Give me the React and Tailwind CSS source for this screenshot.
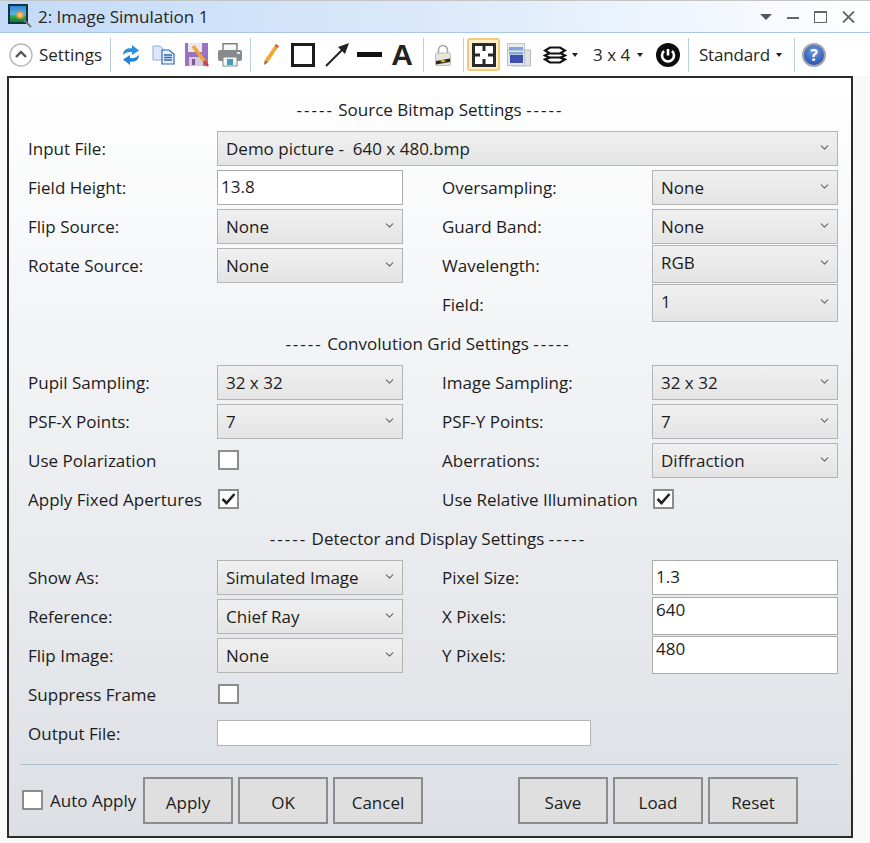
import React from "react";
import { ChevronDown } from "lucide-react";

const Select = ({ value, tall, className = "" }) => (
  <div className={`flex whitespace-pre border border-[#b4b4b4] bg-gradient-to-b from-[#f0f0f0] to-[#e4e4e4] pl-2 pr-[6px] text-[#1c1c1c] ${tall ? "mb-[4px] h-[38px] items-start pt-[8px]" : "h-[35px] items-center"} ${className}`}>
    <span className="flex-1">{value}</span>
    <ChevronDown size={13} strokeWidth={2} className={`text-[#666] ${tall ? "mt-[2px]" : "mb-[3px]"}`} />
  </div>
);

const Input = ({ value, tall }) => (
  <div className={`flex border border-[#ababab] bg-white px-[3px] text-[#1c1c1c] ${tall ? "mb-[2px] h-[38px] items-start pt-[3px]" : "h-[35px] items-center pb-[3px]"}`}>
    {value}
  </div>
);

const Check = ({ checked }) => (
  <div className="mb-[2px] ml-[1px] flex h-[20px] w-[21px] items-center justify-center border-2 border-[#8c8c8c] bg-white">
    {checked && (
      <svg width="15" height="12" viewBox="0 0 15 12">
        <path d="M1.5 6 L5.5 10 L13.5 1" fill="none" stroke="#222" strokeWidth="2.6" />
      </svg>
    )}
  </div>
);

const Row = ({ label, width, children }) => (
  <div className="flex h-[39px] items-center">
    <div className={`shrink-0 text-[#1c1c1c] ${width}`}>{label}</div>
    <div className="flex-1">{children}</div>
  </div>
);

const L = ({ label, children }) => <Row label={label} width="w-[189px]">{children}</Row>;
const R = ({ label, children }) => <Row label={label} width="w-[210px]">{children}</Row>;

const Heading = ({ title, shift }) => (
  <div className={`flex h-[39px] items-center justify-center text-[#1c1c1c] ${shift}`}>
    <div className="whitespace-pre">
      <span className="tracking-[2px]">-----</span> {title} <span className="tracking-[2px]">-----</span>
    </div>
  </div>
);

const Columns = ({ left, right }) => (
  <div className="grid grid-cols-[375px_396px] gap-x-[39px]">
    <div>{left}</div>
    <div>{right}</div>
  </div>
);

const Sep = ({ className = "" }) => <div className={`h-[34px] w-px shrink-0 bg-[#b9cfe2] ${className}`} />;

const Btn = ({ children }) => (
  <div className="flex h-[47px] w-[90px] items-center justify-center border-2 border-[#8c8c8c] bg-[#dfdfdf] pt-[3px] text-[#1c1c1c]">{children}</div>
);

const Caret = ({ className = "" }) => (
  <div className={`h-0 w-0 shrink-0 border-x-[3px] border-t-[4px] border-x-transparent border-t-[#222] ${className}`} />
);

const LogoIcon = () => (
  <svg width="25" height="25" viewBox="0 0 25 25" className="shrink-0">
    <defs>
      <linearGradient id="logoSky" x1="0" y1="0" x2="0" y2="1">
        <stop offset="0" stopColor="#2f86d8" />
        <stop offset="0.55" stopColor="#5db8d8" />
        <stop offset="0.6" stopColor="#36b04a" />
        <stop offset="1" stopColor="#0f7a3a" />
      </linearGradient>
      <radialGradient id="logoSun">
        <stop offset="0" stopColor="#fff3c8" />
        <stop offset="0.5" stopColor="#f7983a" />
        <stop offset="1" stopColor="#f7983a" stopOpacity="0" />
      </radialGradient>
    </defs>
    <rect x="0" y="0" width="20" height="20" fill="#143444" />
    <rect x="2" y="2" width="16" height="16" fill="url(#logoSky)" />
    <circle cx="12" cy="11" r="5" fill="url(#logoSun)" />
    <path d="M16 16 L23 23" stroke="#777" strokeWidth="2" />
  </svg>
);

const RefreshIcon = () => (
  <svg width="18" height="22" viewBox="0 0 18 22" className="ml-[11px] shrink-0">
    <path d="M1 11 C1 6 5 3.5 10 4.5 L10 1 L17 6.5 L10 11 L10 8 C6 7.5 3.5 8.5 1 11Z" fill="#2b8fe0" />
    <path d="M17 11 C17 16 13 18.5 8 17.5 L8 21 L1 15.5 L8 11 L8 14 C12 14.5 14.5 13.5 17 11Z" fill="#1f86dc" />
  </svg>
);

const CopyIcon = () => (
  <svg width="23" height="20" viewBox="0 0 23 20" className="ml-[12px] shrink-0">
    <path d="M1 1 H8 L11 4 V15 H1Z" fill="#dce8f8" stroke="#8fb0dc" />
    <path d="M10 5 H17 L22 9 V19 H10Z" fill="#e8f0fb" stroke="#2f68b4" strokeWidth="1.2" />
    <path d="M12 10 h8 M12 12.5 h8 M12 15 h8" stroke="#2f68b4" strokeWidth="1.3" />
  </svg>
);

const SaveIcon = () => (
  <svg width="24" height="24" viewBox="0 0 24 24" className="ml-[10px] shrink-0">
    <rect x="0" y="0" width="23" height="23" fill="#9b72bd" />
    <rect x="3" y="0" width="14" height="9" fill="#ece8f0" />
    <rect x="4" y="14" width="14" height="9" fill="#d6c8e0" />
    <rect x="7" y="16" width="3" height="6" fill="#7a5a9a" />
    <path d="M8 3 L20 19" stroke="#eea638" strokeWidth="3.6" />
    <path d="M19 18 L23 23" stroke="#d8402a" strokeWidth="2.6" />
  </svg>
);

const PrintIcon = () => (
  <svg width="24" height="24" viewBox="0 0 24 24" className="ml-[9px] shrink-0">
    <rect x="5" y="0.7" width="14" height="8" fill="#f6f6f6" stroke="#7b7b7b" strokeWidth="1.4" />
    <rect x="0" y="7" width="24" height="11" rx="2" fill="#868b90" />
    <rect x="5" y="14" width="14" height="9" fill="#f6f6f6" stroke="#888" />
    <rect x="9" y="16" width="6" height="6" fill="#3fa0b8" />
    <rect x="19" y="9" width="3" height="2" fill="#dfe5e8" />
  </svg>
);

const PencilIcon = () => (
  <svg width="16" height="22" viewBox="0 0 16 22" className="ml-[12px] shrink-0">
    <path d="M13 3 L3.5 17" stroke="#f0a83a" strokeWidth="4" />
    <path d="M14.5 1 L13 3" stroke="#d9573a" strokeWidth="4" />
    <path d="M1 21 L1.8 16 L5.2 18.2Z" fill="#8a6d3a" />
  </svg>
);

const LockIcon = () => (
  <svg width="16" height="22" viewBox="0 0 16 22" className="ml-[11px] shrink-0">
    <path d="M3.5 10 V6 a4.5 4.5 0 0 1 9 0 V10" fill="none" stroke="#a8a8a4" strokeWidth="1.6" />
    <rect x="0.5" y="9" width="15" height="12.5" rx="1.5" fill="#e6e6de" stroke="#bdbdb0" />
    <path d="M1 17 L15 14.5 V18 L1 20.5Z" fill="#2a2a20" />
    <path d="M5 16.5 L9 15.8 L11 17.5 L7 18.6Z" fill="#d8b62a" />
  </svg>
);

const ActiveIcon = () => (
  <div className="ml-[3px] flex h-[33px] w-[33px] shrink-0 items-center justify-center rounded-[3px] border-2 border-[#f2c979] bg-[#fff1cf]">
    <svg width="24" height="24" viewBox="0 0 24 24">
      <rect x="1.5" y="1.5" width="21" height="21" fill="#fff" stroke="#2a2a2a" strokeWidth="3" />
      <path d="M12 2 V8 M12 16 V22 M2 12 H8 M16 12 H22" stroke="#2a2a2a" strokeWidth="3" />
    </svg>
  </div>
);

const WindowsIcon = () => (
  <svg width="24" height="24" viewBox="0 0 24 24" className="ml-[7px] shrink-0">
    <rect x="0.5" y="0.5" width="17" height="11" fill="#e8ecf2" stroke="#c2c8d0" />
    <rect x="2" y="4" width="14" height="3" fill="#7fa3d4" />
    <rect x="6" y="7" width="17.5" height="16" fill="#dfe2e6" stroke="#b5bcc6" />
    <rect x="0.5" y="7.5" width="17" height="15" fill="#e4e7ec" stroke="#bcc2ca" />
    <rect x="2" y="9" width="14" height="2.5" fill="#86a7d4" />
    <rect x="3" y="12" width="13" height="8" fill="#3e4fae" />
  </svg>
);

const LayersIcon = () => (
  <svg width="24" height="18" viewBox="0 0 24 18" fill="none" stroke="#111" strokeWidth="2.2" className="ml-[12px] shrink-0">
    <path d="M7 1.5 H17 L22 4.5 L17 7.5 H7 L2 4.5Z" />
    <path d="M6 7.5 L2 9.5 L6 11.5 H18 L22 9.5 L18 7.5" />
    <path d="M7 11.5 L2 13.5 L7 16.5 H17 L22 13.5 L17 11.5" />
  </svg>
);

const PowerIcon = () => (
  <svg width="24" height="24" viewBox="0 0 24 24" className="ml-[13px] shrink-0">
    <circle cx="12" cy="12" r="12" fill="#0d0d0d" />
    <path d="M8 8 A6 6 0 1 0 16 8" fill="none" stroke="#fff" strokeWidth="2.6" />
    <path d="M12 6 V12.5" stroke="#fff" strokeWidth="2.6" />
  </svg>
);

const HelpIcon = () => (
  <svg width="24" height="24" viewBox="0 0 24 24" className="ml-[7px] shrink-0">
    <defs>
      <radialGradient id="helpFill" cx="0.5" cy="0.35" r="0.7">
        <stop offset="0" stopColor="#6f9be0" />
        <stop offset="1" stopColor="#1f48a8" />
      </radialGradient>
    </defs>
    <circle cx="12" cy="12" r="11" fill="url(#helpFill)" stroke="#a0a4ad" strokeWidth="2" />
    <text x="12" y="18" textAnchor="middle" fill="#fff" fontSize="16" fontWeight="700">?</text>
  </svg>
);

const App = () => (
  <div className="flex h-[843px] w-[870px] flex-col overflow-hidden bg-[#f9f9f9] font-['Open_Sans'] text-[17px] leading-none">
    {/* title bar */}
    <div className="flex h-[33px] shrink-0 items-center border-t border-b border-t-[#c4c4c4] border-b-[#a9c8e8] bg-gradient-to-r from-[#c3dbf8] via-[#dbe9fa] to-[#ffffff] pl-[8px] pr-[15px]">
      <LogoIcon />
      <span className="ml-[5px] flex-1 text-[#262626]">2: Image Simulation 1</span>
      <div className="flex items-center gap-[15px]">
        <div className="h-0 w-0 border-x-[6px] border-t-[6px] border-x-transparent border-t-[#555]" />
        <div className="mt-[2px] h-[2px] w-[12px] bg-[#666]" />
        <div className="h-[12px] w-[13px] border border-t-2 border-[#666]" />
        <svg width="13" height="12" viewBox="0 0 13 12"><path d="M1 0.5 L12 11.5 M12 0.5 L1 11.5" stroke="#666" strokeWidth="1.8" /></svg>
      </div>
    </div>

    {/* toolbar */}
    <div className="flex h-[43px] shrink-0 items-center bg-white pl-[9px] text-[#262626]">
      <svg width="24" height="24" viewBox="0 0 24 24" fill="none" className="shrink-0">
        <circle cx="12" cy="12" r="11" fill="#fff" stroke="#b8b8b8" strokeWidth="1.4" />
        <path d="M7 14 L12 9 L17 14" stroke="#555" strokeWidth="2.4" />
      </svg>
      <span className="ml-[6px] w-[64px] whitespace-nowrap">Settings</span>
      <Sep className="ml-[7px]" />
      <RefreshIcon />
      <CopyIcon />
      <SaveIcon />
      <PrintIcon />
      <Sep className="ml-[8px]" />
      <PencilIcon />
      <div className="ml-[12px] h-[24px] w-[24px] shrink-0 border-[3px] border-[#1c1c1c]" />
      <svg width="24" height="24" viewBox="0 0 24 24" className="ml-[10px] shrink-0"><path d="M1 23 L20 4" stroke="#222" strokeWidth="2" /><path d="M13 4 L24 0 L20 11Z" fill="#222" /></svg>
      <div className="ml-[8px] h-[5px] w-[25px] shrink-0 bg-[#111]" />
      <span className="ml-[9px] w-[22px] shrink-0 text-center font-['Liberation_Sans'] text-[30px] font-bold text-[#222]">A</span>
      <Sep className="ml-[10px]" />
      <LockIcon />
      <Sep className="ml-[12px]" />
      <ActiveIcon />
      <WindowsIcon />
      <LayersIcon />
      <Caret className="ml-[5px]" />
      <span className="ml-[15px] w-[38px] whitespace-nowrap">3 x 4</span>
      <Caret className="ml-[6px]" />
      <PowerIcon />
      <Sep className="ml-[8px]" />
      <span className="ml-[10px] w-[70px] whitespace-nowrap tracking-[-0.2px]">Standard</span>
      <Caret className="ml-[7px]" />
      <Sep className="ml-[12px]" />
      <HelpIcon />
    </div>

    {/* settings panel */}
    <div className="ml-[7px] flex h-[762px] w-[846px] flex-col border-2 border-[#2a2a2a] bg-gradient-to-b from-[#ffffff] to-[#dcdfe4] pl-[19px] pr-[13px] pt-[12px]">
      <Heading title="Source Bitmap Settings" shift="pr-[6px]" />
      <div className="flex h-[39px] items-center">
        <div className="w-[189px] shrink-0 text-[#1c1c1c]">Input File:</div>
        <Select value="Demo picture -  640 x 480.bmp" className="flex-1" />
      </div>
      <Columns
        left={<>
          <L label="Field Height:"><Input value="13.8" /></L>
          <L label="Flip Source:"><Select value="None" /></L>
          <L label="Rotate Source:"><Select value="None" /></L>
        </>}
        right={<>
          <R label="Oversampling:"><Select value="None" /></R>
          <R label="Guard Band:"><Select value="None" /></R>
          <R label="Wavelength:"><Select value="RGB" tall /></R>
          <R label="Field:"><Select value="1" tall /></R>
        </>}
      />
      <Heading title="Convolution Grid Settings" shift="pr-[10px]" />
      <Columns
        left={<>
          <L label="Pupil Sampling:"><Select value="32 x 32" /></L>
          <L label="PSF-X Points:"><Select value="7" /></L>
          <L label="Use Polarization"><Check /></L>
          <L label="Apply Fixed Apertures"><Check checked /></L>
        </>}
        right={<>
          <R label="Image Sampling:"><Select value="32 x 32" /></R>
          <R label="PSF-Y Points:"><Select value="7" /></R>
          <R label="Aberrations:"><Select value="Diffraction" /></R>
          <R label="Use Relative Illumination"><Check checked /></R>
        </>}
      />
      <Heading title="Detector and Display Settings" shift="pr-[10px]" />
      <Columns
        left={<>
          <L label="Show As:"><Select value="Simulated Image" /></L>
          <L label="Reference:"><Select value="Chief Ray" /></L>
          <L label="Flip Image:"><Select value="None" /></L>
          <L label="Suppress Frame"><Check /></L>
        </>}
        right={<>
          <R label="Pixel Size:"><Input value="1.3" /></R>
          <R label="X Pixels:"><Input value="640" tall /></R>
          <R label="Y Pixels:"><Input value="480" tall /></R>
        </>}
      />
      <div className="flex h-[39px] items-center">
        <div className="w-[189px] shrink-0 text-[#1c1c1c]">Output File:</div>
        <div className="mb-[1px] h-[26px] w-[374px] border border-[#b4b4b4] bg-white" />
      </div>
      <div className="-ml-[8px] mt-[11px] h-px bg-[#a9c0d0]" />
      <div className="-ml-[6px] mt-[12px] flex items-center">
        <div className="-ml-[1px]"><Check /></div>
        <span className="ml-[7px] w-[93px] whitespace-nowrap text-[#1c1c1c]">Auto Apply</span>
        <div className="flex gap-[5px]">
          <Btn>Apply</Btn>
          <Btn>OK</Btn>
          <Btn>Cancel</Btn>
        </div>
        <div className="ml-[95px] flex gap-[5px]">
          <Btn>Save</Btn>
          <Btn>Load</Btn>
          <Btn>Reset</Btn>
        </div>
      </div>
    </div>
  </div>
);

export default App;
